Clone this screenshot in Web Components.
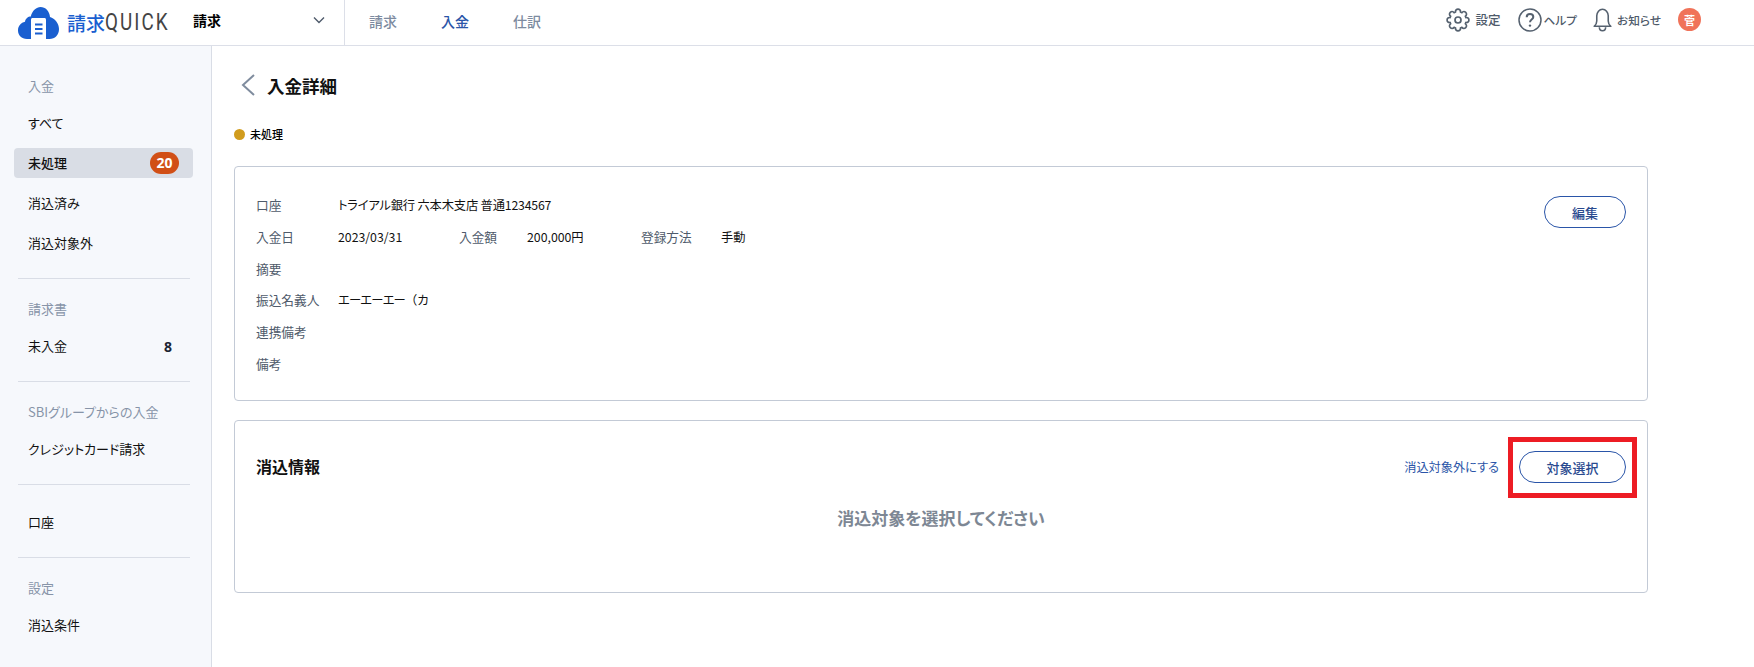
<!DOCTYPE html>
<html lang="ja">
<head>
<meta charset="utf-8">
<title>入金詳細</title>
<style>
  html, body { margin: 0; height: 100%; background: #fff; }
  body { font-family: "Noto Sans CJK JP", "Noto Sans", sans-serif; font-size: 13px; color: #111; overflow: hidden; font-feature-settings: "palt"; }
</style>
</head>
<body>
<app-shell>
  <app-header slot="header"></app-header>
  <side-nav slot="side">
    <side-section heading="入金">
      <side-item>すべて</side-item>
      <side-item active count="20">未処理</side-item>
      <side-item>消込済み</side-item>
      <side-item>消込対象外</side-item>
    </side-section>
    <side-section heading="請求書">
      <side-item count="8" plain>未入金</side-item>
    </side-section>
    <side-section heading="SBIグループからの入金">
      <side-item>クレジットカード請求</side-item>
    </side-section>
    <side-section>
      <side-item>口座</side-item>
    </side-section>
    <side-section heading="設定" last>
      <side-item>消込条件</side-item>
    </side-section>
  </side-nav>
  <payment-detail></payment-detail>
</app-shell>

<script>
  const html = (s) => { const t = document.createElement('template'); t.innerHTML = s; return t; };

  // 8 lobed gear outline for the settings icon
  const gearPath = () => {
    const at = (r, a) => (12 + r * Math.cos(a)).toFixed(2) + ' ' + (12 + r * Math.sin(a)).toFixed(2);
    let d = '';
    for (let k = 0; k < 8; k++) {
      const a = k * Math.PI / 4;
      d += (k ? 'L' : 'M') + at(8.3, a - 0.3) + 'C' + at(12.3, a - 0.26) + ' ' + at(12.3, a + 0.26) + ' ' + at(8.3, a + 0.3);
    }
    return d + 'Z';
  };

  class AppShell extends HTMLElement {
    constructor() {
      super();
      const shadow = this.attachShadow({ mode: 'open' });
      shadow.innerHTML = `
        <style>
          :host { display: grid; grid-template-rows: 46px 621px; grid-template-columns: 212px 1fr; width: 1754px; height: 667px; }
          ::slotted([slot=header]) { grid-column: 1 / 3; }
        </style>
        <slot name="header"></slot><slot name="side"></slot><slot></slot>`;
    }
  }

  const headerTpl = html(`
    <style>
      :host { display: flex; align-items: stretch; height: 46px; box-sizing: border-box; border-bottom: 1px solid #dcdfe8; background: #fff; }
      .logo { display: flex; align-items: center; width: 193px; padding-left: 18px; box-sizing: border-box; }
      .logo svg { width: 41px; height: 33px; margin-right: 8px; flex: none; }
      .logo b { font-weight: 500; font-size: 19px; color: #1a5fd0; font-feature-settings: normal; }
      .logo i { font: 400 23px Roboto, sans-serif; color: #444; display: inline-block; transform: scaleX(.82); transform-origin: left center; letter-spacing: 2.500px; }
      .select { display: flex; align-items: center; justify-content: space-between; width: 152px; padding: 0 18px 5px 0; box-sizing: border-box; font-weight: 700; font-size: 14px; color: #000; border-right: 1px solid #dcdfe8; margin-right: 24px; }
      .select svg { width: 14px; height: 14px; }
      nav { display: flex; align-items: center; gap: 44px; padding-bottom: 3px; font-size: 14px; font-weight: 500; color: #7d8ba0; }
      nav .on { color: #2a55a8; }
      .tools { margin-left: auto; display: flex; align-items: center; padding: 0 53px 6px 0; font-size: 11.700px; font-weight: 500; color: #4f5b6b; }
      .tool { display: flex; align-items: center; }
      .tool svg { display: block; flex: none; }
      .avatar { width: 23px; height: 23px; border-radius: 50%; background: #f0735a; color: #fff; font-size: 11px; font-weight: 700; display: flex; align-items: center; justify-content: center; margin-left: 17px; }
    </style>
    <div class="logo">
      <svg viewBox="0 0 41 33" aria-hidden="true">
        <path fill="#1a5fd0" d="M9 33C3.500 33 0 29 0 24.500 0 20 3 16.500 7 15.800 7.500 12.500 10 10.500 12.800 10.500 14.300 4.500 18.500 1 22.500 1 27.500 1 31.500 5 32 11 37 12.500 41 17.500 41 23 41 29 37 33 31.500 33Z"/>
        <path fill="#fff" d="M13 33V13.500C13 12.700 13.700 12 14.500 12H26.500C27.300 12 28 12.700 28 13.500V33Z"/>
        <path fill="#1a5fd0" d="M17 17.500H24.500V19.500H17ZM17 22H24.500V24H17ZM17 26.500H24.500V28.500H17Z"/>
      </svg>
      <b>請求</b><i>QUICK</i>
    </div>
    <div class="select"><span>請求</span>
      <svg viewBox="0 0 14 14" fill="none" stroke="#4f5b6b" stroke-width="1.400"><path d="M2 4.500 7 9.500 12 4.500"/></svg>
    </div>
    <nav><span>請求</span><span class="on">入金</span><span>仕訳</span></nav>
    <div class="tools">
      <div class="tool">
        <svg width="24" height="24" viewBox="0 0 24 24" fill="none" stroke="#55616f" stroke-width="1.700" stroke-linejoin="round"><circle cx="12" cy="12" r="3"/><path id="gear"/></svg>
        <span style="margin-left:5px;font-size:12.500px">設定</span>
      </div>
      <div class="tool" style="margin-left:18px">
        <svg width="24" height="24" viewBox="0 0 24 24" fill="none" stroke="#55616f" stroke-width="1.500"><circle cx="12" cy="12" r="11"/><path stroke-width="2" d="M8.700 9.300c0-2 1.500-3.200 3.300-3.200s3.300 1.100 3.300 2.900c0 2.600-3.300 2.500-3.300 5.200"/><circle cx="12" cy="17.600" r="1.200" fill="#55616f" stroke="none"/></svg>
        <span style="margin-left:1px">ヘルプ</span>
      </div>
      <div class="tool" style="margin-left:16px">
        <svg width="19" height="24" viewBox="0 0 18 23" fill="none" stroke="#55616f" stroke-width="1.500"><path d="M1 17.500c1.800-1.300 2.500-2.800 2.500-5V7.500C3.500 4 6 1.200 9 1.200s5.500 2.800 5.500 6.300v5c0 2.200.7 3.700 2.500 5Z" stroke-linejoin="round"/><path d="M6 18.500c0 2 1.300 3.300 3 3.300s3-1.300 3-3.300"/></svg>
        <span style="margin-left:5px">お知らせ</span>
      </div>
      <div class="avatar">菅</div>
    </div>`);

  class AppHeader extends HTMLElement {
    constructor() {
      super();
      const shadow = this.attachShadow({ mode: 'open' });
      shadow.appendChild(headerTpl.content.cloneNode(true));
      shadow.getElementById('gear').setAttribute('d', gearPath());
    }
  }

  class SideNav extends HTMLElement {
    constructor() {
      super();
      this.attachShadow({ mode: 'open' }).innerHTML = `
        <style>
          :host { display: block; box-sizing: border-box; background: #f6f8fc; border-right: 1px solid #d9dde6; padding: 25px 18px 0 14px; width: 212px; height: 621px; overflow: hidden; }
        </style>
        <slot></slot>`;
    }
  }

  class SideSection extends HTMLElement {
    constructor() {
      super();
      const h = this.getAttribute('heading');
      this.attachShadow({ mode: 'open' }).innerHTML = `
        <style>
          :host { display: block; }
          .h { height: 30px; line-height: 30px; margin-bottom: 7px; padding-left: 14px; color: #8794a8; font-size: 13px; }
          .items { display: flex; flex-direction: column; gap: 10px; padding-bottom: 20px; }
          .nohead { padding-top: 7px; }
          .rule { height: 1px; background: #d9dde6; margin: 0 3px 15px 4px; }
          :host([last]) .rule { display: none; }
        </style>
        ${h ? `<div class="h">${h}</div>` : ''}
        <div class="items ${h ? '' : 'nohead'}"><slot></slot></div>
        <div class="rule"></div>`;
    }
  }

  class SideItem extends HTMLElement {
    constructor() {
      super();
      const c = this.getAttribute('count');
      this.attachShadow({ mode: 'open' }).innerHTML = `
        <style>
          :host { display: flex; align-items: center; justify-content: space-between; height: 30px; padding: 0 14px; border-radius: 4px; font-size: 13px; color: #111; box-sizing: border-box; }
          :host([active]) { background: #d9dde5; font-weight: 500; }
          .label { padding-bottom: 2px; }
          .count { font-weight: 700; font-size: 14px; font-family: "Noto Sans", sans-serif; }
          :host([active]) .count { background: #d14f16; color: #fff; border-radius: 11px; width: 29px; height: 22px; line-height: 22px; text-align: center; }
          :host([plain]) .count { padding-right: 7px; font-size: 14px; color: #1b2433; }
        </style>
        <span class="label"><slot></slot></span>${c ? `<span class="count">${c}</span>` : ''}`;
    }
  }

  class RoundButton extends HTMLElement {
    constructor() {
      super();
      this.attachShadow({ mode: 'open' }).innerHTML = `
        <style>
          :host { display: inline-flex; align-items: center; justify-content: center; box-sizing: border-box; height: 32px; border: 1px solid #2a55a8; border-radius: 16px; font-size: 13px; font-weight: 500; color: #2a4a8f; background: #fff; }
        </style>
        <slot></slot>`;
    }
  }

  class InfoRow extends HTMLElement {
    constructor() {
      super();
      this.attachShadow({ mode: 'open' }).innerHTML = `
        <style>
          :host { display: flex; align-items: center; height: 31.700px; font-size: 13px; color: #111; }
          ::slotted(.a) { width: 81px; flex: none; }
        </style>
        <slot></slot>`;
    }
  }

  const detailTpl = html(`
    <style>
      :host { display: block; padding: 0 0 0 22px; }
      .title { display: flex; align-items: center; height: 30px; margin-top: 24px; padding-left: 7px; font-size: 17.500px; font-weight: 700; color: #111; }
      .title svg { width: 14px; height: 22px; margin-right: 12px; }
      .status { display: flex; align-items: center; height: 16px; margin-top: 26px; font-size: 11px; font-weight: 500; color: #000; }
      .status i { width: 11px; height: 11px; border-radius: 50%; background: #d19c1d; margin-right: 5px; }
      .card { width: 1414px; box-sizing: border-box; border: 1px solid #c3cad6; border-radius: 4px; background: #fff; }
      .c1 { margin-top: 24px; height: 235px; padding: 22px 21px 0; display: flex; justify-content: space-between; }
      .rows { flex: 1; }
      .l { color: #4f5b6b; font-size: 12.700px; }
      .v { color: #111; font-size: 12.300px; margin-left: 1px; }
      .tight { letter-spacing: -.200px; }
      .tighter { letter-spacing: -.800px; }
      .paren { font-feature-settings: normal; letter-spacing: 0; }
      .edit { width: 82px; margin-top: 7px; }
      .c2 { margin-top: 19px; height: 173px; padding: 30px 21px 0; }
      .top { display: flex; align-items: center; height: 32px; }
      .top h2 { margin: 0; padding-bottom: 2px; font-size: 16px; font-weight: 700; color: #111; }
      .top a { margin-left: auto; margin-right: 20px; color: #2a55a8; font-size: 12.200px; }
      .btnwrap { position: relative; display: flex; }
      .btnwrap round-button { width: 107px; }
      .mark { position: absolute; left: -11px; top: -14px; width: 129px; height: 61px; box-sizing: border-box; border: 5px solid #ed1c24; }
      .empty { text-align: center; margin-top: 22px; font-size: 17px; font-weight: 700; color: #7d8794; }
    </style>
    <div class="title">
      <svg viewBox="0 0 14 22" fill="none" stroke="#7f8c9e" stroke-width="2"><path d="M13 1 2 11 13 21"/></svg>
      入金詳細
    </div>
    <div class="status"><i></i>未処理</div>
    <div class="card c1">
      <div class="rows">
        <info-row><span class="l a">口座</span><span class="v tight">トライアル銀行 六本木支店 普通1234567</span></info-row>
        <info-row><span class="l a">入金日</span><span class="v" style="width:121px">2023/03/31</span><span class="l" style="width:67px">入金額</span><span class="v" style="width:114px">200,000円</span><span class="l" style="width:79px">登録方法</span><span class="v">手動</span></info-row>
        <info-row><span class="l a">摘要</span></info-row>
        <info-row><span class="l a">振込名義人</span><span class="v tighter">エーエーエー<span class="paren">（</span>カ</span></info-row>
        <info-row><span class="l a">連携備考</span></info-row>
        <info-row><span class="l a">備考</span></info-row>
      </div>
      <round-button class="edit">編集</round-button>
    </div>
    <div class="card c2">
      <div class="top">
        <h2>消込情報</h2>
        <a>消込対象外にする</a>
        <div class="btnwrap"><round-button>対象選択</round-button><div class="mark"></div></div>
      </div>
      <div class="empty">消込対象を選択してください</div>
    </div>`);

  class PaymentDetail extends HTMLElement {
    constructor() {
      super();
      this.attachShadow({ mode: 'open' }).appendChild(detailTpl.content.cloneNode(true));
    }
  }

  customElements.define('app-shell', AppShell);
  customElements.define('app-header', AppHeader);
  customElements.define('side-nav', SideNav);
  customElements.define('side-section', SideSection);
  customElements.define('side-item', SideItem);
  customElements.define('round-button', RoundButton);
  customElements.define('info-row', InfoRow);
  customElements.define('payment-detail', PaymentDetail);
</script>
</body>
</html>
